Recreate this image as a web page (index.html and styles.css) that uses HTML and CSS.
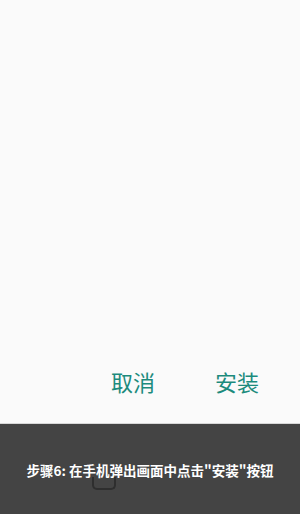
FILE: index.html
```html
<!DOCTYPE html>
<html lang="zh-CN">
<head>
    <meta charset="UTF-8" />
    <title>安装步骤</title>
    <link rel="stylesheet" href="styles.css">
</head>
<body>

<!-- Install dialog -->
<div class="screen">
    <div class="actions">
        <span class="btn">取消</span>
        <span class="btn">安装</span>
    </div>
</div>

<!-- Caption bar -->
<div class="caption">
    <p>步骤6: 在手机弹出画面中点击"安装"按钮</p>
    <div class="home"></div>
</div>

</body>
</html>
```

FILE: styles.css
```css
body {
    font-family: "Noto Sans CJK SC", "Noto Sans", sans-serif;
    background-color: #fafafa;
    margin: 0;
    padding: 0;
    width: 300px;
}

.screen {
    height: 423px;
    display: flex;
    flex-direction: column;
    justify-content: flex-end;
    border-bottom: 1px solid #d8d8d8;
}

.actions {
    display: flex;
    justify-content: flex-end;
    gap: 60px;
    padding: 0 41px 29px 0;
}

.btn {
    font-size: 22px;
    line-height: 26px;
    color: #1c8b7d;
}

.caption {
    position: relative;
    height: 90px;
    background-color: #444444;
    padding-top: 36px;
    box-sizing: border-box;
}

.caption p {
    margin: 0;
    text-align: center;
    color: #ffffff;
    font-weight: bold;
    font-size: 13.5px;
    line-height: 20px;
}

.home {
    position: absolute;
    left: 92px;
    top: 53px;
    width: 20px;
    height: 11px;
    border: 2px solid #2e2e2e;
    border-top: none;
    border-radius: 0 0 5px 5px;
}
```
